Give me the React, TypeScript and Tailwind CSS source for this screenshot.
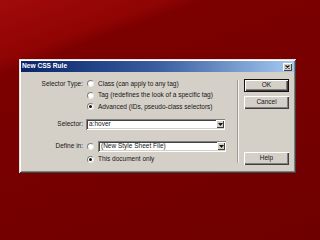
import { ReactNode } from 'react';

function Radio({ checked = false }: { checked?: boolean }) {
  return (
    <span className="w-[7px] h-[7px] rounded-full bg-white border border-t-[#808080] border-l-[#808080] border-b-[#e8e6e0] border-r-[#e8e6e0] flex items-center justify-center shrink-0">
      {checked && <span className="w-[3px] h-[3px] rounded-full bg-[#111]" />}
    </span>
  );
}

function RadioRow({ checked, children }: { checked?: boolean; children: ReactNode }) {
  return (
    <div className="h-[11.5px] flex items-center gap-[4px] pl-[1px]">
      <Radio checked={checked} />
      <span>{children}</span>
    </div>
  );
}

function Combo({ value, width }: { value: string; width: string }) {
  return (
    <div
      className={`${width} h-[11px] bg-white flex items-center justify-between pl-[3px] pr-[1px] shadow-[inset_1px_1px_#808080,inset_-1px_-1px_#ffffff,inset_2px_2px_#404040,inset_-2px_-2px_#d4d0c8]`}
    >
      <span>{value}</span>
      <span className="w-[8px] h-[8px] bg-[#d4d0c8] flex items-center justify-center shadow-[inset_1px_1px_#ffffff,inset_-1px_-1px_#404040]">
        <svg width="5" height="3" viewBox="0 0 5 3">
          <path d="M0 0h5L2.5 3z" fill="#111" />
        </svg>
      </span>
    </div>
  );
}

function Button({ label, isDefault = false, className = '' }: { label: string; isDefault?: boolean; className?: string }) {
  return (
    <div
      className={`w-[45px] h-[13px] bg-[#d4d0c8] flex items-center justify-center ${
        isDefault
          ? 'shadow-[inset_1px_1px_#111,inset_-1px_-1px_#111,inset_2px_2px_#ffffff,inset_-2px_-2px_#404040,inset_-3px_-3px_#808080]'
          : 'shadow-[inset_1px_1px_#ffffff,inset_-1px_-1px_#404040,inset_-2px_-2px_#808080]'
      } ${className}`}
    >
      {label}
    </div>
  );
}

export default function App() {
  return (
    <div className="w-[320px] h-[240px] overflow-hidden pt-[59px] pl-[19px] bg-[linear-gradient(160deg,#a10a0a_0%,#900404_17%,#7c0000_21%,#6f0000_100%)] font-['Liberation_Sans',Arial,sans-serif] text-[6.5px] leading-none text-[#161616]">
      <div className="w-[277px] h-[114px] bg-[#d4d0c8] p-[2px] flex flex-col shadow-[inset_1px_1px_#e4e2dc,inset_-1px_-1px_#404040,inset_2px_2px_#ffffff,inset_-2px_-2px_#808080]">
        {/* title bar */}
        <div className="h-[11px] flex items-center justify-between pl-[1px] pr-[2px] bg-gradient-to-r from-[#0a246a] via-[#3a5ea0] to-[#a6caf0]">
          <span className="text-white font-bold text-[6.6px]">New CSS Rule</span>
          <span className="w-[9px] h-[8px] bg-[#d4d0c8] flex items-center justify-center shadow-[inset_1px_1px_#ffffff,inset_-1px_-1px_#404040]">
            <svg width="5" height="4" viewBox="0 0 5 4">
              <path d="M0.5 0.5L4.5 3.5M4.5 0.5L0.5 3.5" stroke="#111" strokeWidth="1.1" />
            </svg>
          </span>
        </div>

        <div className="flex flex-1">
          {/* main area */}
          <div className="w-[212px] pt-[6px] grid grid-cols-[62px_1fr] gap-x-[3px] content-start">
            <div className="h-[11.5px] flex items-center justify-end">Selector Type:</div>
            <div>
              <RadioRow>Class (can apply to any tag)</RadioRow>
              <RadioRow>Tag (redefines the look of a specific tag)</RadioRow>
              <RadioRow checked>Advanced (IDs, pseudo-class selectors)</RadioRow>
            </div>

            <div className="mt-[6px] h-[11px] flex items-center justify-end">Selector:</div>
            <div className="mt-[6px]">
              <Combo value="a:hover" width="w-[139px]" />
            </div>

            <div className="mt-[11px] h-[11px] flex items-center justify-end">Define in:</div>
            <div className="mt-[11px] flex items-center gap-[4px] pl-[1px]">
              <Radio />
              <Combo value="(New Style Sheet File)" width="w-[128px]" />
            </div>

            <div />
            <div className="mt-[2px]">
              <RadioRow checked>This document only</RadioRow>
            </div>
          </div>

          {/* separator */}
          <div className="ml-[4px] mt-[8px] mb-[8px] w-[2px] border-l border-l-[#a09c94] border-r border-r-[#f4f2ee]" />

          {/* buttons */}
          <div className="ml-[5px] pt-[7px] flex flex-col">
            <Button label="OK" isDefault />
            <Button label="Cancel" className="mt-[4px]" />
            <Button label="Help" className="mt-[43px]" />
          </div>
        </div>
      </div>
    </div>
  );
}
